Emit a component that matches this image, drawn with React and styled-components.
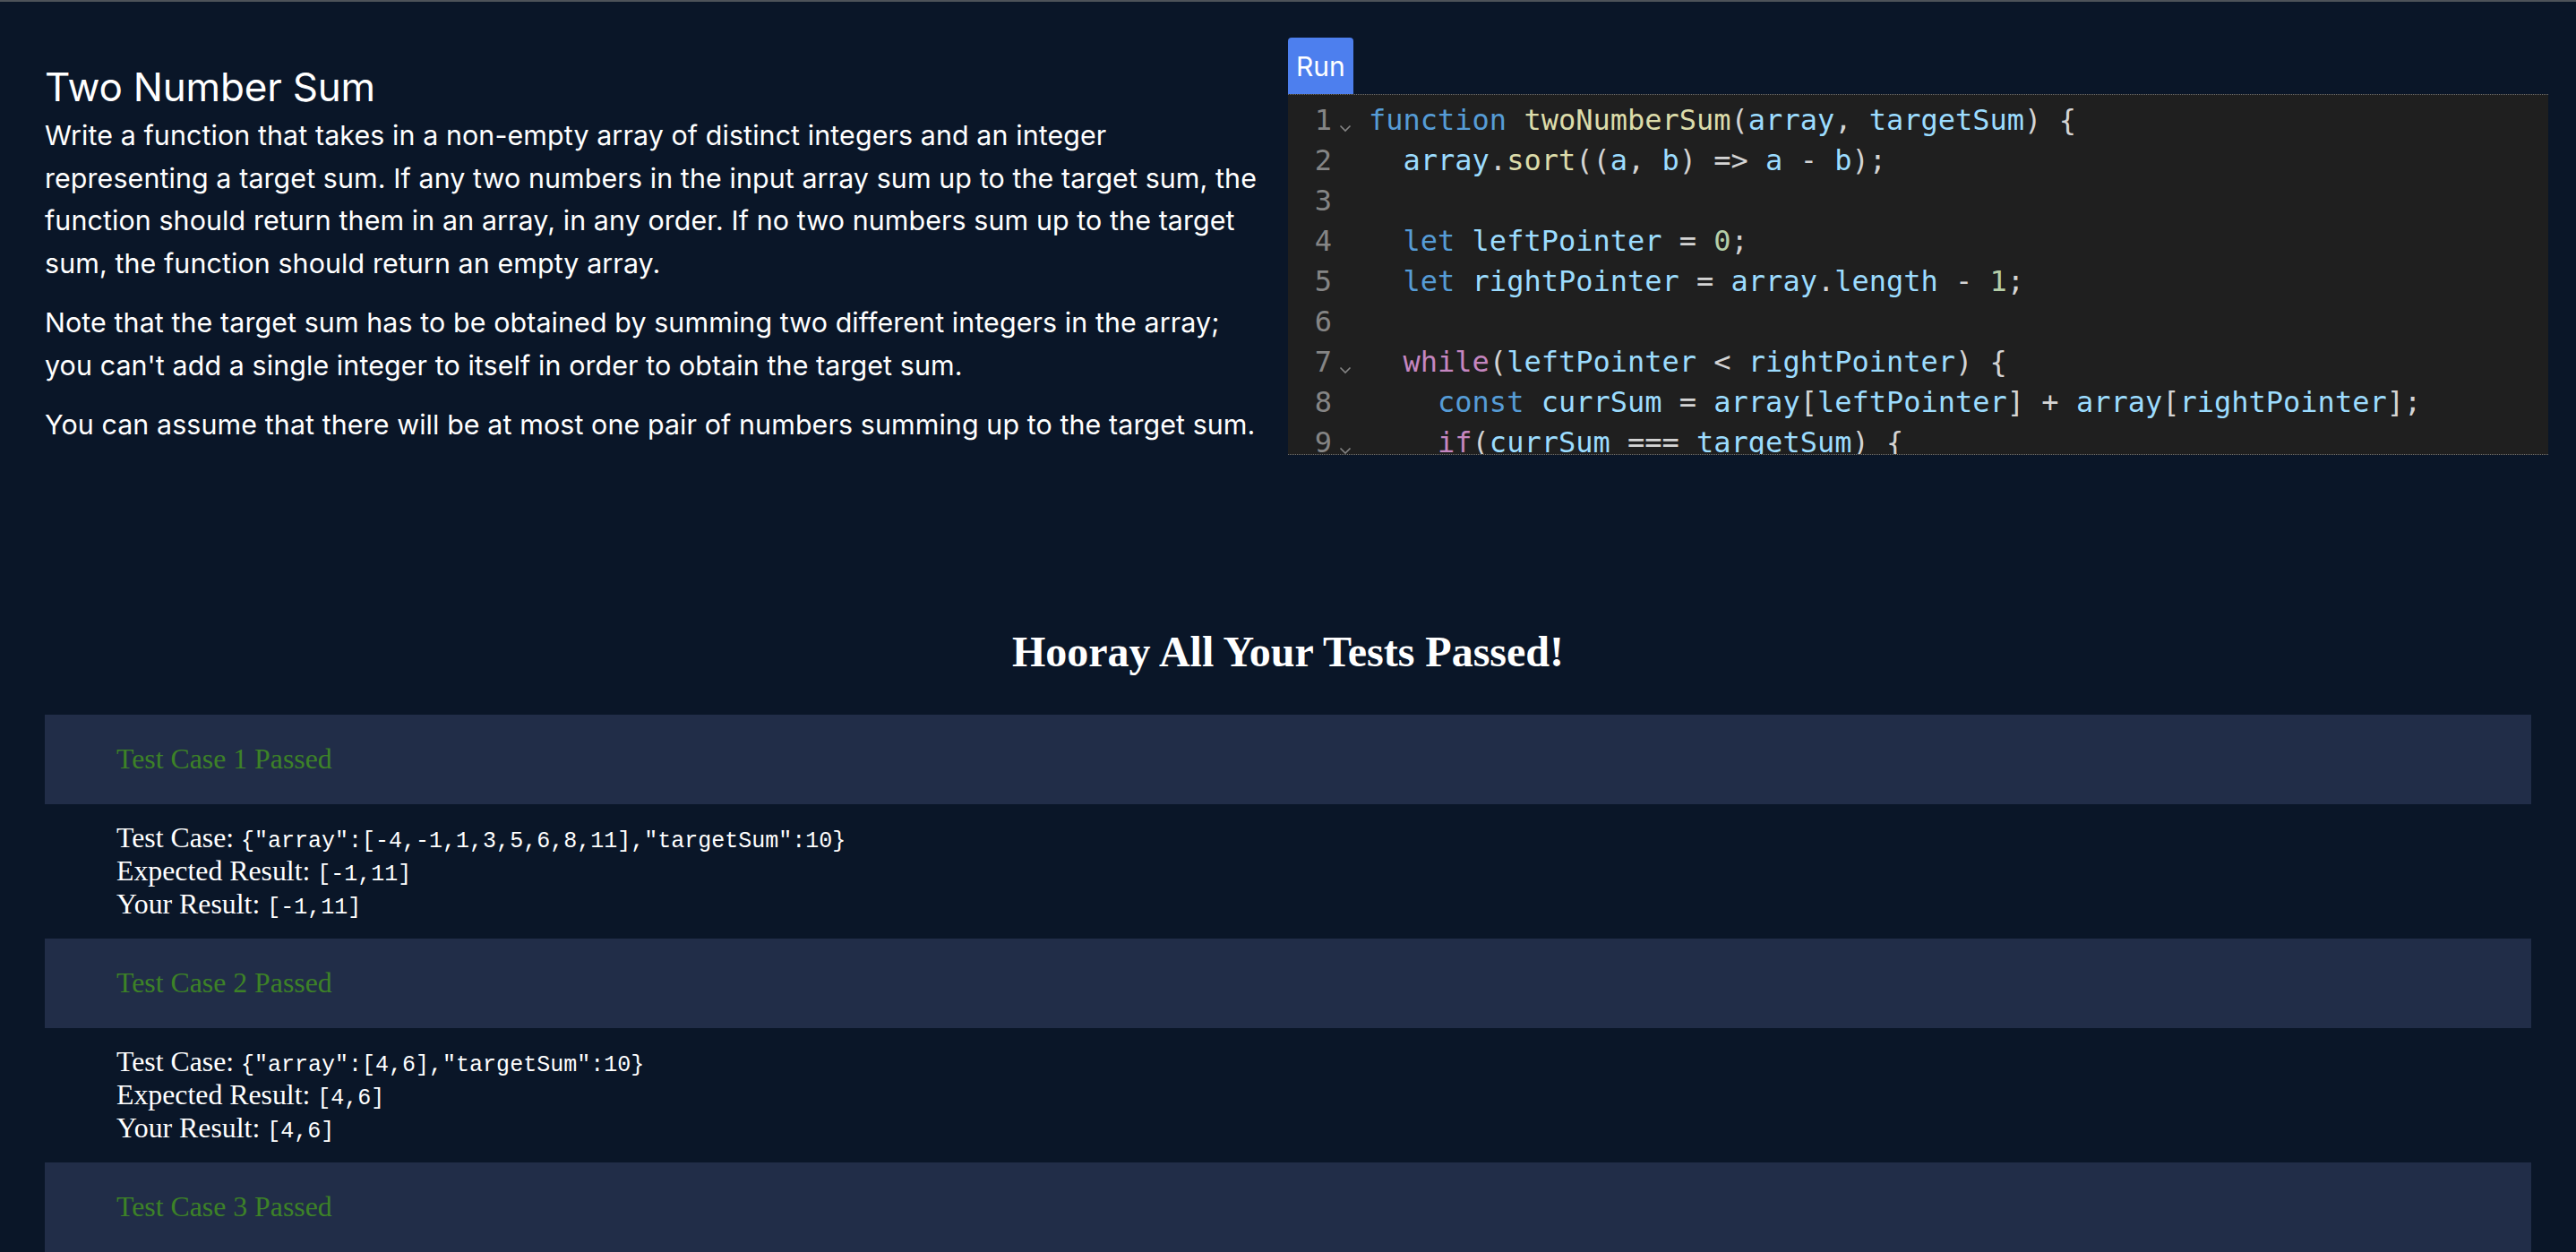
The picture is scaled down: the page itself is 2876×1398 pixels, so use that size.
import React from "react";
import styled, { createGlobalStyle } from "styled-components";

const GlobalStyle = createGlobalStyle`
  html, body {
    margin: 0;
    padding: 0;
    height: 100%;
    overflow: hidden;
    background: #0a1628;
  }
  * {
    box-sizing: border-box;
  }
`;

const Page = styled.div`
  min-height: 100vh;
  background: #0a1628;
  border-top: 2px solid #4d5259;
  color: #ffffff;
`;

const Top = styled.div`
  display: grid;
  grid-template-columns: 1372px 1407px;
  column-gap: 16px;
  padding-left: 50px;
  align-items: start;
`;

const Prompt = styled.div`
  padding-top: 69px;
  font-family: Inter, "Liberation Sans", sans-serif;
  color: #ffffff;
`;

const Title = styled.h1`
  margin: 0 0 4px;
  font-size: 44px;
  font-weight: 400;
  line-height: 53px;
  letter-spacing: -0.2px;
`;

const Para = styled.p`
  margin: 0 0 18px;
  font-size: 30.4px;
  line-height: 47.6px;
  letter-spacing: 0.1px;

  &:first-of-type {
    margin-bottom: 19px;
  }

  &:last-child {
    margin-bottom: 0;
  }
`;

const EditorCol = styled.div`
  padding-top: 40px;
  display: flex;
  flex-direction: column;
  align-items: flex-start;
`;

const RunButton = styled.button`
  height: 63px;
  padding: 0 9px;
  border: none;
  border-radius: 4px 4px 0 0;
  background: #4d7fee;
  color: #ffffff;
  font-family: Inter, "Liberation Sans", sans-serif;
  font-size: 30px;
  display: flex;
  align-items: center;
  cursor: pointer;
`;

const Editor = styled.div`
  width: 1407px;
  height: 403px;
  background: #1f1f1f;
  border-top: 1px dotted rgba(255, 255, 255, 0.35);
  border-bottom: 1px dotted rgba(255, 255, 255, 0.35);
  overflow: hidden;
  padding-top: 6px;
  font-family: "DejaVu Sans Mono", "Liberation Mono", monospace;
  font-size: 32px;
`;

const CodeLine = styled.div`
  display: flex;
  height: 45px;
  line-height: 45px;
  white-space: pre;
`;

const LineNo = styled.span`
  width: 49px;
  flex: none;
  text-align: right;
  color: #858585;
`;

const Fold = styled.span`
  width: 34px;
  flex: none;
  display: flex;
  justify-content: center;
  padding-top: 27px;
  padding-right: 4px;
`;

const Code = styled.span`
  padding-left: 7px;
`;

const tokenColors = {
  k: "#569cd6",
  c: "#c586c0",
  f: "#dcdcaa",
  v: "#9cdcfe",
  n: "#b5cea8",
  p: "#d4d4d4",
};

const Tok = styled.span`
  color: ${(p) => tokenColors[p.$t]};
`;

const Heading = styled.h2`
  margin: 195px 0 45px;
  text-align: center;
  font-family: "Liberation Serif", "Times New Roman", serif;
  font-size: 48px;
  font-weight: 700;
  line-height: 50px;
`;

const Tests = styled.div`
  margin: 0 50px;
  font-family: "Liberation Serif", "Times New Roman", serif;
`;

const CaseHeader = styled.div`
  height: 100px;
  background: #212d48;
  display: flex;
  align-items: center;
  padding-left: 80px;
  color: #3d8227;
  font-size: 31.8px;
`;

const CaseBody = styled.div`
  padding: 19px 80px 20px;
  font-size: 31.8px;
  line-height: 37px;
  color: #ffffff;
`;

const Mono = styled.code`
  font-family: "Liberation Mono", "Courier New", monospace;
  font-size: 25px;
  line-height: 1;
`;

const code = [
  [["k", "function"], ["p", " "], ["f", "twoNumberSum"], ["p", "("], ["v", "array"], ["p", ", "], ["v", "targetSum"], ["p", ") {"]],
  [["p", "  "], ["v", "array"], ["p", "."], ["f", "sort"], ["p", "(("], ["v", "a"], ["p", ", "], ["v", "b"], ["p", ") => "], ["v", "a"], ["p", " - "], ["v", "b"], ["p", ");"]],
  [],
  [["p", "  "], ["k", "let"], ["p", " "], ["v", "leftPointer"], ["p", " = "], ["n", "0"], ["p", ";"]],
  [["p", "  "], ["k", "let"], ["p", " "], ["v", "rightPointer"], ["p", " = "], ["v", "array"], ["p", "."], ["v", "length"], ["p", " - "], ["n", "1"], ["p", ";"]],
  [],
  [["p", "  "], ["c", "while"], ["p", "("], ["v", "leftPointer"], ["p", " < "], ["v", "rightPointer"], ["p", ") {"]],
  [["p", "    "], ["k", "const"], ["p", " "], ["v", "currSum"], ["p", " = "], ["v", "array"], ["p", "["], ["v", "leftPointer"], ["p", "] + "], ["v", "array"], ["p", "["], ["v", "rightPointer"], ["p", "];"]],
  [["p", "    "], ["c", "if"], ["p", "("], ["v", "currSum"], ["p", " === "], ["v", "targetSum"], ["p", ") {"]],
  [["p", "      "], ["c", "return"], ["p", " ["], ["v", "array"], ["p", "["], ["v", "leftPointer"], ["p", "], "], ["v", "array"], ["p", "["], ["v", "rightPointer"], ["p", "]];"]],
];

const folds = [0, 6, 8];

const tests = [
  { id: 1, input: '{"array":[-4,-1,1,3,5,6,8,11],"targetSum":10}', expected: "[-1,11]", result: "[-1,11]" },
  { id: 2, input: '{"array":[4,6],"targetSum":10}', expected: "[4,6]", result: "[4,6]" },
  { id: 3, input: '{"array":[-7,-5,-3,-1,0,1,3,5,7],"targetSum":-5}', expected: "[-5,0]", result: "[-5,0]" },
];

function Chevron() {
  return (
    <svg width="14" height="9" viewBox="0 0 14 9">
      <path d="M1.5 1.5 L7 7 L12.5 1.5" fill="none" stroke="#858585" strokeWidth="1.6" />
    </svg>
  );
}

export default function App() {
  return (
    <Page>
      <GlobalStyle />
      <Top>
        <Prompt>
          <Title>Two Number Sum</Title>
          <Para>
            Write a function that takes in a non-empty array of distinct integers and an integer
            representing a target sum. If any two numbers in the input array sum up to the target
            sum, the function should return them in an array, in any order. If no two numbers sum
            up to the target sum, the function should return an empty array.
          </Para>
          <Para>
            Note that the target sum has to be obtained by summing two different integers in the
            array; you can't add a single integer to itself in order to obtain the target sum.
          </Para>
          <Para>
            You can assume that there will be at most one pair of numbers summing up to the target
            sum.
          </Para>
        </Prompt>
        <EditorCol>
          <RunButton>Run</RunButton>
          <Editor>
            {code.map((line, i) => (
              <CodeLine key={i}>
                <LineNo>{i + 1}</LineNo>
                <Fold>{folds.includes(i) ? <Chevron /> : null}</Fold>
                <Code>
                  {line.map(([t, text], j) => (
                    <Tok key={j} $t={t}>
                      {text}
                    </Tok>
                  ))}
                </Code>
              </CodeLine>
            ))}
          </Editor>
        </EditorCol>
      </Top>
      <Heading>Hooray All Your Tests Passed!</Heading>
      <Tests>
        {tests.map((t) => (
          <React.Fragment key={t.id}>
            <CaseHeader>Test Case {t.id} Passed</CaseHeader>
            <CaseBody>
              <div>
                Test Case: <Mono>{t.input}</Mono>
              </div>
              <div>
                Expected Result: <Mono>{t.expected}</Mono>
              </div>
              <div>
                Your Result: <Mono>{t.result}</Mono>
              </div>
            </CaseBody>
          </React.Fragment>
        ))}
      </Tests>
    </Page>
  );
}
